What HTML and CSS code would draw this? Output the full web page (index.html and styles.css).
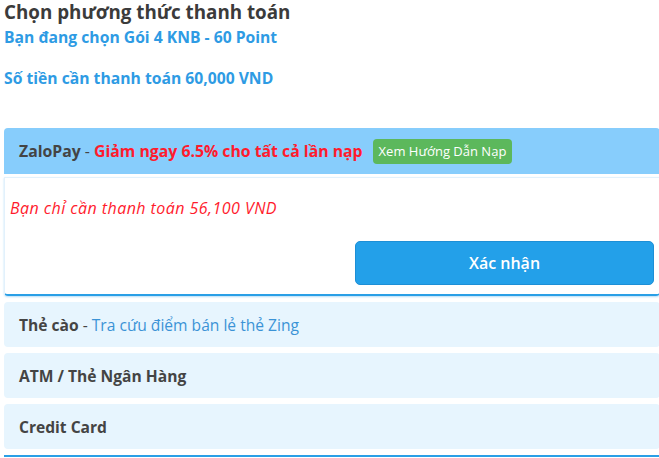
FILE: index.html
```html
<!DOCTYPE html>
<html lang="vi">
<head>
<meta charset="utf-8">
<link rel="stylesheet" href="styles.css">
</head>
<body>
<div class="page">
  <h1 class="title">Chọn phương thức thanh toán</h1>
  <p class="info first">Bạn đang chọn Gói 4 KNB - 60 Point</p>
  <p class="info second">Số tiền cần thanh toán 60,000 VND</p>

  <div class="methods">
    <div class="panel active">
      <div class="panel-head">
        <span class="name">ZaloPay</span><span class="sep"> - </span><span class="promo">Giảm ngay 6.5% cho tất cả lần nạp</span>
        <a class="guide">Xem Hướng Dẫn Nạp</a>
      </div>
      <div class="panel-body">
        <p class="pay-note">Bạn chỉ cần thanh toán 56,100 VND</p>
        <div class="actions"><button class="confirm">Xác nhận</button></div>
      </div>
    </div>

    <div class="row"><span class="name">Thẻ cào</span><span class="sep"> - </span><span class="link">Tra cứu điểm bán lẻ thẻ Zing</span></div>
    <div class="row"><span class="name">ATM / Thẻ Ngân Hàng</span></div>
    <div class="row"><span class="name">Credit Card</span></div>
    <div class="end-line"></div>
  </div>
</div>
</body>
</html>
```

FILE: styles.css
```css
* { box-sizing: border-box; }
html, body { margin: 0; padding: 0; background: #fff; }
body {
  font-family: "Open Sans", "Noto Sans", "DejaVu Sans", sans-serif;
  color: #444;
  overflow: hidden;
}
.page {
  padding-left: 4px;
  width: 660px;
}
.title {
  margin: 0;
  font-size: 18.8px;
  line-height: 24px;
  font-weight: 700;
  color: #3b3b3b;
}
.info {
  margin: 0;
  font-size: 15.7px;
  line-height: 20px;
  font-weight: 700;
  color: #2e9be4;
}
.info.first { margin-top: 3px; }
.info.second { margin-top: 21px; }

.methods {
  margin-top: 40px;
  display: flex;
  flex-direction: column;
  gap: 6px;
}
.panel { display: flex; flex-direction: column; gap: 3px; }
.panel-head {
  height: 46px;
  background: #87cdfc;
  border-radius: 4px 4px 0 0;
  padding-left: 15px;
  display: flex;
  align-items: center;
  font-size: 15.8px;
  font-weight: 700;
}
.name { color: #444; font-weight: 700; }
.sep { color: #444; font-weight: 400; white-space: pre; }
.promo { color: #ff1b2d; font-weight: 700; }
.guide {
  margin-left: 10px;
  height: 25px;
  padding: 0 6px;
  display: flex;
  align-items: center;
  background: #5cb85c;
  color: #fff;
  border-radius: 4px;
  font-size: 13px;
  font-weight: 400;
}
.panel-body {
  height: 119px;
  border: 1px solid #e2f1fc;
  border-bottom: 2px solid #2a9fe6;
  border-radius: 0 0 4px 4px;
  border-right: none;
  padding: 0 6px 9px 5px;
  display: flex;
  flex-direction: column;
  justify-content: space-between;
  box-shadow: 0 1px 2px rgba(42,159,230,0.35);
}
.pay-note {
  margin: 20px 0 0;
  font-size: 16px;
  line-height: 20px;
  font-style: italic;
  letter-spacing: 0.45px;
  color: #ff1b2d;
}
.actions { display: flex; justify-content: flex-end; }
.confirm {
  width: 299px;
  height: 44px;
  border: 1px solid #1d8fd6;
  border-radius: 5px;
  background: #23a0e9;
  color: #fff;
  font-family: inherit;
  font-size: 16px;
  font-weight: 600;
}
.row {
  height: 45px;
  background: #e7f5fe;
  border-radius: 4px;
  padding-left: 15px;
  display: flex;
  align-items: center;
  font-size: 15.6px;
}
.link { color: #3b93d6; font-weight: 400; }
.end-line {
  height: 2px;
  background: #2a9fe6;
}
```
